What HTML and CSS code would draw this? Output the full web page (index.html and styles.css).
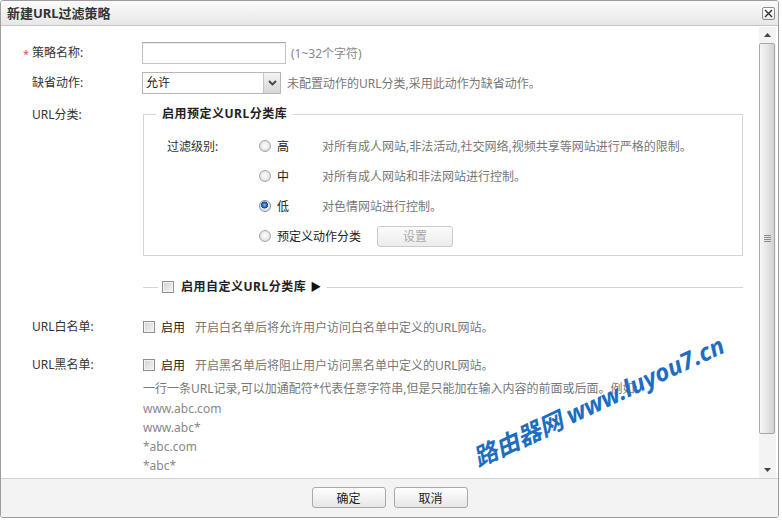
FILE: index.html
```html
<!DOCTYPE html>
<html lang="zh-CN">
<head>
<meta charset="utf-8">
<title>新建URL过滤策略</title>
<link rel="stylesheet" href="styles.css">
</head>
<body>
<div class="dialog">
  <div class="titlebar">
    <span class="title">新建URL过滤策略</span>
    <span class="close" title="关闭">
      <svg width="9" height="9" viewBox="0 0 9 9"><path d="M1 1 L8 8 M8 1 L1 8" stroke="#333" stroke-width="1.4" fill="none"/></svg>
    </span>
  </div>
  <div class="main">
    <div class="content">
      <div class="row r1">
        <span class="label"><span class="req">*</span>策略名称:</span>
        <div class="ctrl">
          <input class="text-input" type="text">
          <span class="hint">(1~32个字符)</span>
        </div>
      </div>
      <div class="row r2">
        <span class="label">缺省动作:</span>
        <div class="ctrl">
          <div class="combo">
            <span class="combo-val">允许</span>
            <span class="combo-btn">
              <svg width="9" height="6" viewBox="0 0 9 6"><path d="M1 1 L4.5 4.5 L8 1" stroke="#444" stroke-width="1.8" fill="none"/></svg>
            </span>
          </div>
          <span class="hint desc">未配置动作的URL分类,采用此动作为缺省动作。</span>
        </div>
      </div>
      <div class="row r3">
        <span class="label lbl16">URL分类:</span>
        <div class="ctrl">
          <fieldset class="group">
            <legend class="legend">启用预定义URL分类库</legend>
            <div class="opt">
              <span class="lvl">过滤级别:</span>
              <input class="radio" type="radio" name="lvl">
              <span class="opt-name">高</span>
              <span class="desc">对所有成人网站,非法活动,社交网络,视频共享等网站进行严格的限制。</span>
            </div>
            <div class="opt">
              <span class="lvl"></span>
              <input class="radio" type="radio" name="lvl">
              <span class="opt-name">中</span>
              <span class="desc">对所有成人网站和非法网站进行控制。</span>
            </div>
            <div class="opt">
              <span class="lvl"></span>
              <input class="radio" type="radio" name="lvl" checked>
              <span class="opt-name">低</span>
              <span class="desc">对色情网站进行控制。</span>
            </div>
            <div class="opt">
              <span class="lvl"></span>
              <input class="radio" type="radio" name="lvl">
              <span class="opt-name wide">预定义动作分类</span>
              <button class="btn-set" type="button" disabled>设置</button>
            </div>
          </fieldset>
        </div>
      </div>
      <div class="row r4">
        <span class="label"></span>
        <div class="ctrl">
          <fieldset class="group collapsed">
            <legend class="legend legend2"><input class="check" type="checkbox"><span>启用自定义URL分类库</span><span class="tri">▶</span></legend>
          </fieldset>
        </div>
      </div>
      <div class="row r5">
        <span class="label">URL白名单:</span>
        <div class="ctrl">
          <input class="check cb-row" type="checkbox">
          <span class="enable">启用</span>
          <span class="desc">开启白名单后将允许用户访问白名单中定义的URL网站。</span>
        </div>
      </div>
      <div class="row r6">
        <span class="label">URL黑名单:</span>
        <div class="ctrl">
          <input class="check cb-row" type="checkbox">
          <span class="enable">启用</span>
          <span class="desc">开启黑名单后将阻止用户访问黑名单中定义的URL网站。</span>
        </div>
      </div>
      <div class="note">
        <div class="note-line">一行一条URL记录,可以加通配符*代表任意字符串,但是只能加在输入内容的前面或后面。例如:</div>
        <div class="ex">www.abc.com</div>
        <div class="ex">www.abc*</div>
        <div class="ex">*abc.com</div>
        <div class="ex">*abc*</div>
      </div>
    </div>
    <div class="scrollbar">
      <div class="sb-btn">
        <svg width="7" height="4" viewBox="0 0 7 4"><path d="M0 4 L3.5 0 L7 4 Z" fill="#444"/></svg>
      </div>
      <div class="sb-track">
        <div class="sb-thumb">
          <span class="grip"></span>
        </div>
      </div>
      <div class="sb-btn">
        <svg width="7" height="4" viewBox="0 0 7 4"><path d="M0 0 L3.5 4 L7 0 Z" fill="#444"/></svg>
      </div>
    </div>
    <div class="watermark">路由器网 www.luyou7.cn</div>
  </div>
  <div class="footer">
    <button class="btn" type="button">确定</button>
    <button class="btn" type="button">取消</button>
  </div>
</div>
</body>
</html>
```
FILE: styles.css
```css
html, body {
  margin: 0;
  padding: 0;
  background: #ffffff;
}
body {
  width: 782px;
  height: 520px;
  font-family: "Noto Sans", "Noto Sans CJK SC", sans-serif;
  font-size: 12px;
  color: #333;
}
.dialog {
  box-sizing: border-box;
  width: 779px;
  height: 518px;
  border: 1px solid #9d9d9d;
  border-radius: 3px;
  display: flex;
  flex-direction: column;
  background: #fff;
  overflow: hidden;
}
.titlebar {
  box-sizing: border-box;
  height: 25px;
  flex: none;
  border-bottom: 1px solid #c6c6c6;
  background: linear-gradient(#fbfbfb, #e7e7e7);
  display: flex;
  align-items: center;
  justify-content: space-between;
  padding: 0 3px 0 6px;
}
.title {
  font-size: 13px;
  font-weight: bold;
  color: #333;
  line-height: 24px;
}
.close {
  box-sizing: border-box;
  width: 13px;
  height: 13px;
  border: 1px solid #8c8c8c;
  border-radius: 2px;
  background: linear-gradient(#ffffff, #ececec);
  display: flex;
  align-items: center;
  justify-content: center;
  margin-top: 1px;
}
.main {
  flex: 1;
  display: flex;
  position: relative;
  min-height: 0;
}
.content {
  width: 758px;
  flex: none;
  box-sizing: border-box;
  padding: 16px 0 0 31px;
  overflow: hidden;
}
.row {
  display: grid;
  grid-template-columns: 110px 1fr;
  align-items: center;
}
.label {
  position: relative;
  color: #333;
  line-height: 20px;
  white-space: nowrap;
}
.lbl16 {
  align-self: start;
  line-height: 16px;
  padding-top: 1px;
}
.req {
  position: absolute;
  left: -9px;
  top: 1px;
  color: #d9534f;
  font-size: 11px;
}
.ctrl {
  display: flex;
  align-items: center;
  min-width: 0;
}
.r1 { height: 22px; }
.r2 { height: 22px; margin-top: 8px; }
.r3 { margin-top: 12px; align-items: start; }
.r4 { margin-top: 23px; }
.r5 { margin-top: 22px; height: 20px; }
.r6 { margin-top: 18px; height: 20px; }
.text-input {
  box-sizing: border-box;
  width: 144px;
  height: 22px;
  margin: 0;
  border: 1px solid #c3c3c3;
  border-top-color: #a9a9a9;
  background: #fff;
  box-shadow: inset 0 1px 1px #eaeaea;
  padding: 0 4px;
  font: inherit;
}
.hint {
  margin-left: 5px;
  color: #888;
  white-space: nowrap;
}
.hint.desc { margin-left: 6px; }
.desc {
  color: #777;
  white-space: nowrap;
}
.combo {
  box-sizing: border-box;
  width: 139px;
  height: 22px;
  border: 1px solid #b7b7b7;
  display: flex;
  align-items: stretch;
  background: #fff;
}
.combo-val {
  flex: 1;
  line-height: 20px;
  padding-left: 3px;
  color: #222;
}
.combo-btn {
  width: 16px;
  border-left: 1px solid #c4c4c4;
  background: linear-gradient(#f4f4f4, #d6d6d6);
  display: flex;
  align-items: center;
  justify-content: center;
}
.group {
  box-sizing: border-box;
  width: 600px;
  margin: 0 0 0 1px;
  padding: 9px 0 4px 23px;
  border: 1px solid #d5d5d5;
  min-width: 0;
}
.legend {
  margin-left: -11px;
  padding: 0 6px;
  font-weight: bold;
  color: #222;
  line-height: 16px;
  letter-spacing: 0.5px;
}
.collapsed {
  border-width: 1px 0 0 0;
  padding: 0;
}
.legend2 {
  margin-left: 15px;
  padding: 0 6px 0 4px;
  display: flex;
  align-items: center;
}
.tri {
  font-size: 11px;
  font-weight: normal;
  color: #111;
  margin-left: 4px;
  letter-spacing: 0;
}
.opt {
  height: 30px;
  display: flex;
  align-items: center;
}
.lvl {
  width: 92px;
  flex: none;
  color: #333;
}
.radio {
  appearance: none;
  -webkit-appearance: none;
  box-sizing: border-box;
  width: 12px;
  height: 12px;
  margin: 0 6px 0 0;
  border-radius: 50%;
  border: 1px solid #a6a6a6;
  background: radial-gradient(circle at 50% 45%, #ffffff 0, #ededed 45%, #cfcfcf 100%);
  flex: none;
}
.radio:checked {
  border-color: #7a8ea8;
  background: radial-gradient(circle at 45% 40%, #8fc0f0 0, #2f6db5 2px, #1c3f73 3.2px, #e9eef4 3.8px, #d0d6de 100%);
}
.opt-name {
  width: 45px;
  flex: none;
  color: #222;
}
.opt-name.wide {
  width: auto;
  margin-right: 16px;
}
.btn-set {
  box-sizing: border-box;
  width: 76px;
  height: 21px;
  margin: 0;
  border: 1px solid #cacaca;
  border-radius: 3px;
  background: linear-gradient(#fbfbfb, #ececec);
  color: #a9a9a9;
  font: inherit;
  padding: 0;
}
.check {
  appearance: none;
  -webkit-appearance: none;
  box-sizing: border-box;
  width: 12px;
  height: 12px;
  margin: 0 7px 0 0;
  border: 1px solid #8f8f8f;
  background: linear-gradient(135deg, #d2d2d2, #f6f6f6);
  box-shadow: inset 0 0 0 1px #f4f4f4;
  flex: none;
}
.cb-row {
  margin: 0 6px 0 1px;
}
.enable {
  color: #222;
  margin-right: 10px;
}
.note {
  margin: 4px 0 0 111px;
  color: #777;
}
.note-line {
  line-height: 20px;
  white-space: nowrap;
}
.ex {
  line-height: 19px;
  color: #888;
}
.scrollbar {
  width: 17px;
  flex: none;
  margin-top: 1px;
  background: #f3f3f3;
  display: flex;
  flex-direction: column;
}
.sb-btn {
  height: 16px;
  flex: none;
  display: flex;
  align-items: center;
  justify-content: center;
}
.sb-track {
  flex: 1;
  padding: 0 1px 0 0;
}
.sb-thumb {
  box-sizing: border-box;
  height: 391px;
  width: 16px;
  border: 1px solid #a8a8a8;
  border-radius: 2px;
  background: linear-gradient(90deg, #f7f7f7, #e2e2e2 60%, #d0d0d0);
  display: flex;
  align-items: center;
  justify-content: center;
}
.grip {
  width: 7px;
  height: 7px;
  background: repeating-linear-gradient(#8a8a8a 0 1px, transparent 1px 2px);
}
.watermark {
  position: absolute;
  left: 597px;
  top: 374px;
  transform: translate(-50%, -50%) rotate(-25deg);
  white-space: nowrap;
  font-family: "Noto Sans", "Noto Sans CJK SC", sans-serif;
  font-size: 24px;
  font-weight: bold;
  font-style: italic;
  color: #1d6ec0;
  pointer-events: none;
}
.footer {
  flex: none;
  box-sizing: border-box;
  height: 39px;
  border-top: 1px solid #d2d2d2;
  background: #f3f3f3;
  display: flex;
  justify-content: center;
  gap: 8px;
  padding-top: 8px;
}
.btn {
  box-sizing: border-box;
  width: 74px;
  height: 21px;
  margin: 0;
  padding: 0;
  border: 1px solid #a9a9a9;
  border-radius: 3px;
  background: linear-gradient(#ffffff, #e6e6e6);
  color: #222;
  font: inherit;
}
```
